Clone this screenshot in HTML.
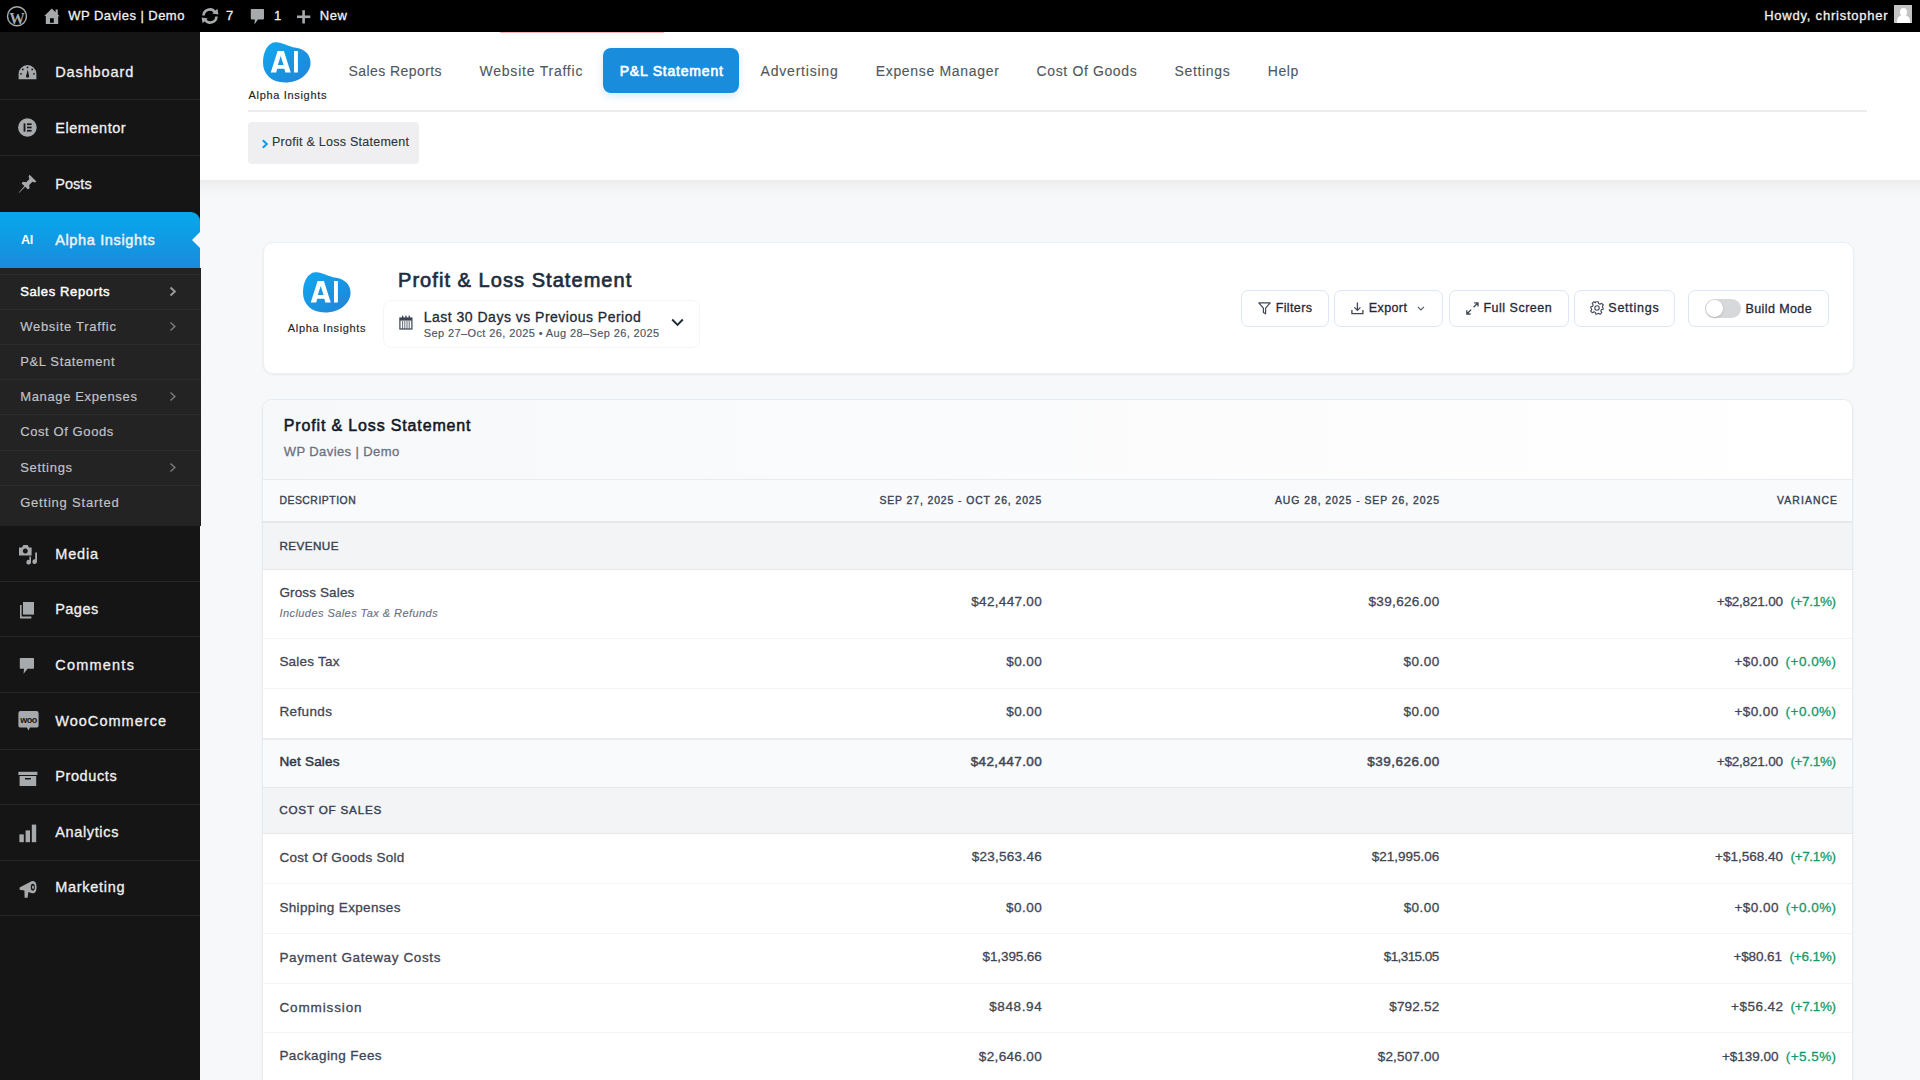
<!DOCTYPE html>
<html><head><meta charset="utf-8">
<style>
*{box-sizing:border-box;margin:0;padding:0}
html,body{width:1920px;height:1080px;overflow:hidden;background:#f7f8fa;font-family:"Liberation Sans",sans-serif}
.t{position:absolute;white-space:nowrap;line-height:1;font-family:"Liberation Sans",sans-serif}
.a{position:absolute}
svg{position:absolute;overflow:visible}
</style></head><body>
<!-- admin bar -->
<div class="a" style="left:0;top:0;width:1920px;height:32px;background:#000"></div>
<!-- sidebar -->
<div class="a" style="left:0;top:32px;width:200px;height:1048px;background:#151515"></div>
<div class="a" style="left:0;top:99px;width:200px;height:1px;background:#262626"></div>
<div class="a" style="left:0;top:155px;width:200px;height:1px;background:#262626"></div>
<div class="a" style="left:0;top:212px;width:200px;height:56px;background:linear-gradient(180deg,#06a8ec,#1a8bdc);border-radius:0 9px 0 0"></div>
<div class="a" style="left:192px;top:232px;width:0;height:0;border-top:8px solid transparent;border-bottom:8px solid transparent;border-right:8px solid #f7f8fa"></div>
<div class="a" style="left:0;top:268px;width:201px;height:258px;background:#232323"></div>
<div class="a" style="left:0;top:274px;width:201px;height:1px;background:#2c2c2c"></div>
<div class="a" style="left:0;top:309px;width:201px;height:1px;background:#2c2c2c"></div>
<div class="a" style="left:0;top:344px;width:201px;height:1px;background:#2c2c2c"></div>
<div class="a" style="left:0;top:379px;width:201px;height:1px;background:#2c2c2c"></div>
<div class="a" style="left:0;top:414px;width:201px;height:1px;background:#2c2c2c"></div>
<div class="a" style="left:0;top:450px;width:201px;height:1px;background:#2c2c2c"></div>
<div class="a" style="left:0;top:485px;width:201px;height:1px;background:#2c2c2c"></div>
<div class="a" style="left:0;top:581px;width:200px;height:1px;background:#262626"></div>
<div class="a" style="left:0;top:636px;width:200px;height:1px;background:#262626"></div>
<div class="a" style="left:0;top:692px;width:200px;height:1px;background:#262626"></div>
<div class="a" style="left:0;top:749px;width:200px;height:1px;background:#262626"></div>
<div class="a" style="left:0;top:804px;width:200px;height:1px;background:#262626"></div>
<div class="a" style="left:0;top:860px;width:200px;height:1px;background:#262626"></div>
<div class="a" style="left:0;top:915px;width:200px;height:1px;background:#262626"></div>
<!-- sub chevrons -->
<svg style="left:169px;top:286px" width="8" height="11" viewBox="0 0 8 11"><path d="M1.5 1.5 L5.8 5.5 L1.5 9.5" fill="none" stroke="#9a9a9a" stroke-width="2"/></svg>
<svg style="left:169px;top:321px" width="8" height="11" viewBox="0 0 8 11"><path d="M1.5 1.5 L5.8 5.5 L1.5 9.5" fill="none" stroke="#777" stroke-width="1.6"/></svg>
<svg style="left:169px;top:391px" width="8" height="11" viewBox="0 0 8 11"><path d="M1.5 1.5 L5.8 5.5 L1.5 9.5" fill="none" stroke="#777" stroke-width="1.6"/></svg>
<svg style="left:169px;top:462px" width="8" height="11" viewBox="0 0 8 11"><path d="M1.5 1.5 L5.8 5.5 L1.5 9.5" fill="none" stroke="#777" stroke-width="1.6"/></svg>

<!-- header -->
<div class="a" style="left:200px;top:179.5px;width:1720px;height:19px;background:linear-gradient(180deg,#ebebec 0%,#f0f1f3 30%,#f5f6f8 65%,#f7f8fa 100%)"></div>
<div class="a" style="left:200px;top:32px;width:1720px;height:147.5px;background:#fff"></div>
<div class="a" style="left:500px;top:32px;width:164px;height:1px;background:#f8b0b0"></div>
<div class="a" style="left:248px;top:110px;width:1619px;height:2px;background:#ececec"></div>
<div class="a" style="left:603px;top:48px;width:136px;height:45px;background:#1a8cdc;border-radius:8px;box-shadow:0 3px 8px rgba(26,140,220,.18)"></div>
<div class="a" style="left:248px;top:122px;width:171px;height:42px;background:#efeff1;border-radius:4px"></div>
<svg style="left:261px;top:139px" width="8" height="10" viewBox="0 0 8 10"><path d="M1.8 1.2 L5.8 5 L1.8 8.8" fill="none" stroke="#0b9be8" stroke-width="2"/></svg>

<!-- card 1 -->
<div class="a" style="left:262.5px;top:241.5px;width:1591px;height:132.5px;background:#fff;border:1px solid #e9f0f4;border-radius:10px;box-shadow:0 1px 3px rgba(16,24,40,.05)"></div>
<div class="a" style="left:383px;top:300px;width:317px;height:48px;border:1px solid #f4f5f7;border-radius:8px"></div>
<div class="a" style="left:1240.5px;top:289.7px;width:88px;height:37.3px;border:1px solid #dce7f3;border-radius:7px;background:#fff"></div>
<div class="a" style="left:1333.8px;top:289.7px;width:109.2px;height:37.3px;border:1px solid #dce7f3;border-radius:7px;background:#fff"></div>
<div class="a" style="left:1448.5px;top:289.7px;width:120.2px;height:37.3px;border:1px solid #dce7f3;border-radius:7px;background:#fff"></div>
<div class="a" style="left:1573.8px;top:289.7px;width:101.5px;height:37.3px;border:1px solid #dce7f3;border-radius:7px;background:#fff"></div>
<div class="a" style="left:1688.2px;top:289.7px;width:140.5px;height:37.3px;border:1px solid #dce7f3;border-radius:7px;background:#fff"></div>
<div class="a" style="left:1704.8px;top:298.8px;width:36px;height:19.5px;border-radius:10px;background:#d6d8dc"></div>
<div class="a" style="left:1706.3px;top:300.3px;width:16.5px;height:16.5px;border-radius:50%;background:#fff;box-shadow:0 1px 2px rgba(0,0,0,.2)"></div>

<!-- card 2 -->
<div class="a" style="left:262px;top:399px;width:1591px;height:700px;background:#fff;border:1px solid #e3ecf2;border-radius:10px;box-shadow:0 1px 3px rgba(16,24,40,.05);overflow:hidden">
  <div class="a" style="left:0;top:0;width:1589px;height:79px;background:linear-gradient(90deg,#f7f8fa,#fff)"></div>
  <div class="a" style="left:0;top:79px;width:1589px;height:44px;background:#f9fafb;border-top:1px solid #e8ebef;border-bottom:2px solid #e5e7eb"></div>
  <div class="a" style="left:0;top:123px;width:1589px;height:47px;background:#f3f4f6;border-bottom:1px solid #e5e7eb"></div>
  <div class="a" style="left:0;top:238px;width:1589px;height:1px;background:#f3f4f6"></div>
  <div class="a" style="left:0;top:288px;width:1589px;height:1px;background:#f3f4f6"></div>
  <div class="a" style="left:0;top:338px;width:1589px;height:49px;background:#f9fafb;border-top:2px solid #eaecef"></div>
  <div class="a" style="left:0;top:387px;width:1589px;height:47px;background:#f3f4f6;border-top:1px solid #e5e7eb;border-bottom:1px solid #e5e7eb"></div>
  <div class="a" style="left:0;top:483px;width:1589px;height:1px;background:#f3f4f6"></div>
  <div class="a" style="left:0;top:533px;width:1589px;height:1px;background:#f3f4f6"></div>
  <div class="a" style="left:0;top:583px;width:1589px;height:1px;background:#f3f4f6"></div>
  <div class="a" style="left:0;top:632px;width:1589px;height:1px;background:#f3f4f6"></div>
</div>

<!-- ===== ICONS ===== -->
<!-- WP logo -->
<svg style="left:6px;top:5px" width="22" height="22" viewBox="0 0 22 22">
 <circle cx="11" cy="11.2" r="9.5" fill="none" stroke="#a7aaad" stroke-width="1.5"/>
 <text x="11" y="19.4" text-anchor="middle" font-family="Liberation Serif" font-weight="700" font-size="17" fill="#a7aaad" transform="translate(11 0) scale(0.92 1) translate(-11 0)">W</text>
</svg>
<!-- home -->
<svg style="left:44px;top:8px" width="17" height="17" viewBox="0 0 17 17">
 <path fill-rule="evenodd" d="M0.3 8 L7.8 0.6 L11.6 4.3 L11.6 1.6 L13.8 1.6 L13.8 6.4 L15.8 8.3 L14.2 8.3 L14.2 16.1 L1.8 16.1 L1.8 8 Z M6 10.2 L6 14.8 L9.8 14.8 L9.8 10.2 Z" fill="#a7aaad"/>
</svg>
<!-- update -->
<svg style="left:200px;top:8px" width="20" height="16" viewBox="0 0 20 16">
 <path d="M3.5 7.5 A6.3 6.3 0 0 1 15 4.2" fill="none" stroke="#a7aaad" stroke-width="2.6"/>
 <path d="M16.5 8.5 A6.3 6.3 0 0 1 5 11.8" fill="none" stroke="#a7aaad" stroke-width="2.6"/>
 <path d="M12.2 5.6 L18.4 6.6 L17.4 0.8 Z" fill="#a7aaad"/>
 <path d="M7.8 10.4 L1.6 9.4 L2.6 15.2 Z" fill="#a7aaad"/>
</svg>
<!-- comment -->
<svg style="left:250px;top:8px" width="15" height="17" viewBox="0 0 15 17">
 <path d="M1.6 1 L13.2 1 Q14 1 14 1.8 L14 10.6 Q14 11.4 13.2 11.4 L8 11.4 L4.4 16.4 L4.8 11.4 L1.6 11.4 Q0.8 11.4 0.8 10.6 L0.8 1.8 Q0.8 1 1.6 1 Z" fill="#a7aaad"/>
</svg>
<!-- plus -->
<svg style="left:297px;top:10px" width="14" height="14" viewBox="0 0 14 14">
 <rect x="5.3" y="0.2" width="2.6" height="13.3" fill="#a7aaad"/><rect x="0" y="5.5" width="13.3" height="2.6" fill="#a7aaad"/>
</svg>
<!-- avatar -->
<div class="a" style="left:1894px;top:5px;width:18px;height:18px;background:#c4c4c4;overflow:hidden">
 <div class="a" style="left:5.5px;top:3px;width:7px;height:8px;border-radius:50%;background:#fff"></div>
 <div class="a" style="left:2.5px;top:10px;width:13px;height:12px;border-radius:6px 6px 0 0;background:#fff"></div>
</div>

<!-- sidebar icons -->
<svg style="left:18px;top:64px" width="19" height="16" viewBox="0 0 19 16">
 <path d="M0.6 15.2 L0.6 10 A8.9 8.9 0 0 1 18.4 10 L18.4 15.2 Z" fill="#a7aaad"/>
 <circle cx="9.5" cy="3.4" r="0.9" fill="#151515"/><circle cx="4.8" cy="5.4" r="0.9" fill="#151515"/><circle cx="14.2" cy="5.4" r="0.9" fill="#151515"/>
 <circle cx="3" cy="9.8" r="0.9" fill="#151515"/><circle cx="16" cy="9.8" r="0.9" fill="#151515"/>
 <path d="M9.8 5.5 L11 11.5 A1.6 1.6 0 1 1 8.2 11.5 Z" fill="#151515"/>
</svg>
<svg style="left:18px;top:118px" width="19" height="19" viewBox="0 0 19 19">
 <circle cx="9.4" cy="9.5" r="9.3" fill="#a7aaad"/>
 <rect x="5.6" y="5.4" width="1.8" height="8.2" fill="#151515"/>
 <rect x="9" y="5.4" width="4.6" height="1.7" fill="#151515"/><rect x="9" y="8.65" width="4.6" height="1.7" fill="#151515"/><rect x="9" y="11.9" width="4.6" height="1.7" fill="#151515"/>
</svg>
<svg style="left:18px;top:174px" width="19" height="20" viewBox="0 0 19 20">
 <path d="M11.6 0.8 L18.4 7.6 L16.8 8.6 L14.4 7.8 L11.2 11 L11.6 14.2 L10 15.6 L7.2 12.8 L1.2 18.8 L0.8 18.4 L6.4 12 L3.6 9.4 L5 7.8 L8.2 8.2 L11.4 5 L10.6 2.6 Z" fill="#a7aaad"/>
</svg>
<div class="t" style="left:21px;top:234.2px;font-size:12.5px;font-weight:700;color:#fff;letter-spacing:-0.3px">AI</div>
<svg style="left:18px;top:544px" width="20" height="21" viewBox="0 0 20 21">
 <path fill-rule="evenodd" d="M1 3.4 L4 3.4 L5.4 1 L9.6 1 L11 3.4 L13.6 3.4 L13.6 11.4 L1 11.4 Z M7.3 4.6 A2.5 2.5 0 1 0 7.31 4.6 Z" fill="#a7aaad"/>
 <path d="M17.2 8.4 L19 8.4 L19 17.6 A2.3 2.3 0 1 1 17.2 15.4 Z" fill="#a7aaad"/>
 <path d="M11.4 12.6 L13 12.6 L13 18.2 A2.3 2.3 0 1 1 11.4 16 Z" fill="#a7aaad"/>
</svg>
<svg style="left:19px;top:601px" width="16" height="18" viewBox="0 0 16 18">
 <path d="M4 1 L15 1 L15 13.6 L4 13.6 Z" fill="#a7aaad"/>
 <path d="M1 4 L2.6 4 L2.6 15.6 L12.4 15.6 L12.4 17.4 L1 17.4 Z" fill="#a7aaad"/>
</svg>
<svg style="left:19px;top:657px" width="16" height="18" viewBox="0 0 16 18">
 <path d="M1.6 1 L14.2 1 Q15 1 15 1.8 L15 11 Q15 11.8 14.2 11.8 L8.6 11.8 L4.6 16.8 L5 11.8 L1.6 11.8 Q0.8 11.8 0.8 11 L0.8 1.8 Q0.8 1 1.6 1 Z" fill="#a7aaad"/>
</svg>
<svg style="left:17.5px;top:710px" width="21" height="22" viewBox="0 0 21 22">
 <path d="M2.6 1 L18.4 1 Q20.6 1 20.6 3.2 L20.6 15.4 Q20.6 17.6 18.4 17.6 L12 17.6 L10.4 20.6 L9 17.6 L2.6 17.6 Q0.4 17.6 0.4 15.4 L0.4 3.2 Q0.4 1 2.6 1 Z" fill="#a7aaad"/>
 <text x="10.5" y="13" text-anchor="middle" font-family="Liberation Sans" font-weight="700" font-size="9" fill="#151515" letter-spacing="-0.5">woo</text>
</svg>
<svg style="left:18px;top:771px" width="20" height="16" viewBox="0 0 20 16">
 <rect x="0.4" y="0.8" width="19" height="3.2" fill="#a7aaad"/>
 <path fill-rule="evenodd" d="M1.6 5 L18.2 5 L18.2 15 L1.6 15 Z M7 7 L7 8.4 L12.8 8.4 L12.8 7 Z" fill="#a7aaad"/>
</svg>
<svg style="left:18.5px;top:824px" width="18" height="19" viewBox="0 0 18 19">
 <rect x="0.4" y="10.4" width="4.4" height="7.8" fill="#a7aaad"/><rect x="6.6" y="6.4" width="4.4" height="11.8" fill="#a7aaad"/><rect x="12.8" y="0.6" width="4.4" height="17.6" fill="#a7aaad"/>
</svg>
<svg style="left:18.5px;top:879px" width="18" height="20" viewBox="0 0 18 20">
 <path d="M0.6 8.6 L13 2 Q17.4 1 17.6 8.2 Q17.4 15 13 14.2 L9.4 13 L8.6 18.8 L5.6 18.8 L5.4 11.4 L0.6 10.8 Z" fill="#a7aaad"/>
 <ellipse cx="13.8" cy="8.2" rx="2" ry="3.4" fill="#151515"/><ellipse cx="14" cy="8.2" rx="0.9" ry="1.8" fill="#a7aaad"/>
</svg>

<!-- header AI logo -->
<svg style="left:263.25px;top:42px" width="48" height="41" viewBox="0 0 48 41">
 <defs><linearGradient id="lg1" x1="0" y1="0" x2="1" y2="1"><stop offset="0" stop-color="#0fa8f0"/><stop offset="1" stop-color="#2283d6"/></linearGradient></defs>
 <path d="M12 0.3 C18.5 -0.5 24 4.2 33 5.8 C43 7.6 47.8 13.5 47.5 21.5 C47 32 36 40.6 22 40.5 C8 40.4 0 32 0 20.5 C0 9.5 5 1 12 0.3 Z" fill="url(#lg1)"/>
 <path fill-rule="evenodd" d="M7.75 30.5 L14.6 9 L20.9 9 L27.75 30.5 L22.3 30.5 L21.3 26.8 L14.2 26.8 L13.2 30.5 Z M14.8 23 L20.6 23 L17.7 14 Z" fill="#fff"/>
 <rect x="31" y="9" width="3.9" height="21.5" fill="#fff"/>
</svg>
<!-- card1 AI logo -->
<svg style="left:303px;top:272.2px" width="48" height="41" viewBox="0 0 48 41">
 <defs><linearGradient id="lg2" x1="0" y1="0" x2="1" y2="1"><stop offset="0" stop-color="#0fa8f0"/><stop offset="1" stop-color="#2283d6"/></linearGradient></defs>
 <path d="M12 0.3 C18.5 -0.5 24 4.2 33 5.8 C43 7.6 47.8 13.5 47.5 21.5 C47 32 36 40.6 22 40.5 C8 40.4 0 32 0 20.5 C0 9.5 5 1 12 0.3 Z" fill="url(#lg2)"/>
 <path fill-rule="evenodd" d="M7.75 30.5 L14.6 9 L20.9 9 L27.75 30.5 L22.3 30.5 L21.3 26.8 L14.2 26.8 L13.2 30.5 Z M14.8 23 L20.6 23 L17.7 14 Z" fill="#fff"/>
 <rect x="31" y="9" width="3.9" height="21.5" fill="#fff"/>
</svg>
<!-- calendar -->
<svg style="left:398.5px;top:315px" width="14" height="15" viewBox="0 0 14 15">
 <rect x="0.9" y="3" width="12" height="11" fill="none" stroke="#3b4452" stroke-width="1.2"/>
 <rect x="0.9" y="3" width="12" height="2.6" fill="#3b4452"/>
 <rect x="3" y="0.6" width="1.3" height="3" fill="#3b4452"/><rect x="6.3" y="0.6" width="1.3" height="3" fill="#3b4452"/><rect x="9.6" y="0.6" width="1.3" height="3" fill="#3b4452"/>
 <path d="M3.6 6 V14 M5.8 6 V14 M8 6 V14 M10.2 6 V14" stroke="#3b4452" stroke-width="0.8"/>
</svg>
<svg style="left:671px;top:318px" width="13" height="9" viewBox="0 0 13 9"><path d="M1.2 1.5 L6.5 6.8 L11.8 1.5" fill="none" stroke="#1f2937" stroke-width="1.9"/></svg>
<!-- button icons -->
<svg style="left:1257.5px;top:302px" width="13" height="13" viewBox="0 0 13 13"><path d="M0.8 0.9 L12.2 0.9 L7.6 6.2 L7.6 11.8 L5.4 10.4 L5.4 6.2 Z" fill="none" stroke="#404856" stroke-width="1.2" stroke-linejoin="round"/></svg>
<svg style="left:1350.5px;top:302px" width="13" height="13" viewBox="0 0 13 13"><path d="M6.4 0.6 V8.2 M3.4 5.4 L6.4 8.4 L9.4 5.4 M0.9 8 V11.6 H11.9 V8" fill="none" stroke="#404856" stroke-width="1.3"/></svg>
<svg style="left:1417px;top:306px" width="8" height="5" viewBox="0 0 8 5"><path d="M0.8 0.8 L3.9 3.9 L7 0.8" fill="none" stroke="#505866" stroke-width="1.1"/></svg>
<svg style="left:1466px;top:302px" width="13" height="13" viewBox="0 0 13 13"><path d="M7.6 5.2 L12 0.8 M8.2 0.8 H12 V4.6 M5.2 7.6 L0.8 12 M0.8 8.2 V12 H4.6" fill="none" stroke="#404856" stroke-width="1.3"/></svg>
<svg style="left:1590px;top:301.4px" width="14" height="14" viewBox="0 0 14 14">
 <path d="M5.8 0.8 H8.2 L8.6 2.6 L10 3.3 L11.6 2.3 L13.3 4 L12.3 5.6 L12.9 7 L13.2 7 L13.2 8.2 L11.4 8.6 L10.8 10 L11.8 11.6 L10.1 13.3 L8.5 12.3 L7.1 12.9 L6.9 13.2 H5.8 L5.4 11.4 L4 10.8 L2.4 11.8 L0.7 10.1 L1.7 8.5 L1.1 7.1 L0.8 6.9 V5.8 L2.6 5.4 L3.2 4 L2.2 2.4 L3.9 0.7 L5.5 1.7 Z" fill="none" stroke="#404856" stroke-width="1.1" stroke-linejoin="round"/>
 <circle cx="7" cy="7" r="2.2" fill="none" stroke="#404856" stroke-width="1.1"/>
</svg>

<div class="t" id="t0" style="left:68.20px;top:9.25px;font-size:13px;color:#f0f0f1;letter-spacing:0.457px;-webkit-text-stroke:0.3px #f0f0f1;">WP Davies | Demo</div>
<div class="t" id="t1" style="left:225.90px;top:9.15px;font-size:13px;color:#f0f0f1;-webkit-text-stroke:0.3px #f0f0f1;">7</div>
<div class="t" id="t2" style="left:274.00px;top:9.15px;font-size:13px;color:#f0f0f1;-webkit-text-stroke:0.3px #f0f0f1;">1</div>
<div class="t" id="t3" style="left:319.80px;top:8.95px;font-size:13px;color:#f0f0f1;letter-spacing:0.492px;-webkit-text-stroke:0.3px #f0f0f1;">New</div>
<div class="t" id="t4" style="left:1764.20px;top:9.15px;font-size:13px;color:#f0f0f1;letter-spacing:0.776px;-webkit-text-stroke:0.3px #f0f0f1;">Howdy, christopher</div>
<div class="t" id="t5" style="left:55.20px;top:64.67px;font-size:14.5px;color:#f0f0f1;letter-spacing:0.895px;-webkit-text-stroke:0.3px #f0f0f1;">Dashboard</div>
<div class="t" id="t6" style="left:55.20px;top:120.98px;font-size:14.5px;color:#f0f0f1;letter-spacing:0.551px;-webkit-text-stroke:0.3px #f0f0f1;">Elementor</div>
<div class="t" id="t7" style="left:55.20px;top:176.68px;font-size:14.5px;color:#f0f0f1;letter-spacing:0.059px;-webkit-text-stroke:0.3px #f0f0f1;">Posts</div>
<div class="t" id="t8" style="left:55.20px;top:232.68px;font-size:14.5px;color:#f0f0f1;letter-spacing:0.647px;-webkit-text-stroke:0.493px #f0f0f1;">Alpha Insights</div>
<div class="t" id="t9" style="left:55.20px;top:546.97px;font-size:14.5px;color:#f0f0f1;letter-spacing:0.875px;-webkit-text-stroke:0.3px #f0f0f1;">Media</div>
<div class="t" id="t10" style="left:55.20px;top:602.47px;font-size:14.5px;color:#f0f0f1;letter-spacing:0.469px;-webkit-text-stroke:0.3px #f0f0f1;">Pages</div>
<div class="t" id="t11" style="left:55.20px;top:658.07px;font-size:14.5px;color:#f0f0f1;letter-spacing:1.227px;-webkit-text-stroke:0.3px #f0f0f1;">Comments</div>
<div class="t" id="t12" style="left:55.20px;top:713.67px;font-size:14.5px;color:#f0f0f1;letter-spacing:1.045px;-webkit-text-stroke:0.3px #f0f0f1;">WooCommerce</div>
<div class="t" id="t13" style="left:55.20px;top:769.17px;font-size:14.5px;color:#f0f0f1;letter-spacing:0.624px;-webkit-text-stroke:0.3px #f0f0f1;">Products</div>
<div class="t" id="t14" style="left:55.20px;top:824.77px;font-size:14.5px;color:#f0f0f1;letter-spacing:0.646px;-webkit-text-stroke:0.3px #f0f0f1;">Analytics</div>
<div class="t" id="t15" style="left:55.20px;top:880.27px;font-size:14.5px;color:#f0f0f1;letter-spacing:0.716px;-webkit-text-stroke:0.3px #f0f0f1;">Marketing</div>
<div class="t" id="t16" style="left:20.20px;top:285.25px;font-size:13px;color:#ffffff;letter-spacing:0.629px;-webkit-text-stroke:0.442px #ffffff;">Sales Reports</div>
<div class="t" id="t17" style="left:20.20px;top:320.25px;font-size:13px;color:#c3c4c7;letter-spacing:0.729px;-webkit-text-stroke:0.15px #c3c4c7;">Website Traffic</div>
<div class="t" id="t18" style="left:20.20px;top:355.25px;font-size:13px;color:#c3c4c7;letter-spacing:0.619px;-webkit-text-stroke:0.15px #c3c4c7;">P&amp;L Statement</div>
<div class="t" id="t19" style="left:20.20px;top:390.25px;font-size:13px;color:#c3c4c7;letter-spacing:0.644px;-webkit-text-stroke:0.15px #c3c4c7;">Manage Expenses</div>
<div class="t" id="t20" style="left:20.20px;top:425.25px;font-size:13px;color:#c3c4c7;letter-spacing:0.593px;-webkit-text-stroke:0.15px #c3c4c7;">Cost Of Goods</div>
<div class="t" id="t21" style="left:20.20px;top:460.95px;font-size:13px;color:#c3c4c7;letter-spacing:0.702px;-webkit-text-stroke:0.15px #c3c4c7;">Settings</div>
<div class="t" id="t22" style="left:20.20px;top:495.95px;font-size:13px;color:#c3c4c7;letter-spacing:0.789px;-webkit-text-stroke:0.15px #c3c4c7;">Getting Started</div>
<div class="t" id="t23" style="left:248.60px;top:90.25px;font-size:11px;color:#1d2327;letter-spacing:0.669px;-webkit-text-stroke:0.15px #1d2327;">Alpha Insights</div>
<div class="t" id="t24" style="left:348.40px;top:63.80px;font-size:14px;color:#50575e;letter-spacing:0.439px;-webkit-text-stroke:0.12px #50575e;">Sales Reports</div>
<div class="t" id="t25" style="left:479.50px;top:63.80px;font-size:14px;color:#50575e;letter-spacing:0.773px;-webkit-text-stroke:0.12px #50575e;">Website Traffic</div>
<div class="t" id="t26" style="left:760.60px;top:63.80px;font-size:14px;color:#50575e;letter-spacing:0.783px;-webkit-text-stroke:0.12px #50575e;">Advertising</div>
<div class="t" id="t27" style="left:875.70px;top:63.80px;font-size:14px;color:#50575e;letter-spacing:0.683px;-webkit-text-stroke:0.12px #50575e;">Expense Manager</div>
<div class="t" id="t28" style="left:1036.60px;top:63.80px;font-size:14px;color:#50575e;letter-spacing:0.626px;-webkit-text-stroke:0.12px #50575e;">Cost Of Goods</div>
<div class="t" id="t29" style="left:1174.40px;top:63.80px;font-size:14px;color:#50575e;letter-spacing:0.687px;-webkit-text-stroke:0.12px #50575e;">Settings</div>
<div class="t" id="t30" style="left:1267.70px;top:63.80px;font-size:14px;color:#50575e;letter-spacing:0.601px;-webkit-text-stroke:0.12px #50575e;">Help</div>
<div class="t" id="t31" style="left:619.70px;top:64.00px;font-size:14px;color:#ffffff;letter-spacing:0.795px;-webkit-text-stroke:0.65px #ffffff;">P&amp;L Statement</div>
<div class="t" id="t32" style="left:272.00px;top:135.97px;font-size:12.5px;color:#2c3338;letter-spacing:0.259px;-webkit-text-stroke:0.12px #2c3338;">Profit &amp; Loss Statement</div>
<div class="t" id="t33" style="left:287.80px;top:323.05px;font-size:11px;color:#1d2327;letter-spacing:0.669px;-webkit-text-stroke:0.15px #1d2327;">Alpha Insights</div>
<div class="t" id="t34" style="left:398.00px;top:269.70px;font-size:20px;color:#1e2d3d;letter-spacing:1.054px;-webkit-text-stroke:0.68px #1e2d3d;">Profit &amp; Loss Statement</div>
<div class="t" id="t35" style="left:423.80px;top:309.90px;font-size:14px;color:#1f2937;letter-spacing:0.489px;-webkit-text-stroke:0.3px #1f2937;">Last 30 Days vs Previous Period</div>
<div class="t" id="t36" style="left:423.80px;top:328.45px;font-size:11px;color:#4b5563;letter-spacing:0.391px;-webkit-text-stroke:0.15px #4b5563;">Sep 27–Oct 26, 2025 • Aug 28–Sep 26, 2025</div>
<div class="t" id="t37" style="left:1275.70px;top:302.07px;font-size:12.5px;color:#1f2937;letter-spacing:0.378px;-webkit-text-stroke:0.3px #1f2937;">Filters</div>
<div class="t" id="t38" style="left:1368.80px;top:302.07px;font-size:12.5px;color:#1f2937;letter-spacing:0.392px;-webkit-text-stroke:0.3px #1f2937;">Export</div>
<div class="t" id="t39" style="left:1483.40px;top:302.07px;font-size:12.5px;color:#1f2937;letter-spacing:0.507px;-webkit-text-stroke:0.3px #1f2937;">Full Screen</div>
<div class="t" id="t40" style="left:1608.30px;top:302.07px;font-size:12.5px;color:#1f2937;letter-spacing:0.747px;-webkit-text-stroke:0.3px #1f2937;">Settings</div>
<div class="t" id="t41" style="left:1745.40px;top:302.68px;font-size:12.5px;color:#1f2937;letter-spacing:0.417px;-webkit-text-stroke:0.3px #1f2937;">Build Mode</div>
<div class="t" id="t42" style="left:283.75px;top:418.00px;font-size:16px;color:#111827;letter-spacing:0.849px;-webkit-text-stroke:0.544px #111827;">Profit &amp; Loss Statement</div>
<div class="t" id="t43" style="left:283.75px;top:444.55px;font-size:13px;color:#6b7280;letter-spacing:0.410px;-webkit-text-stroke:0.3px #6b7280;">WP Davies | Demo</div>
<div class="t" id="t44" style="left:279.40px;top:495.56px;font-size:10.4px;color:#374151;letter-spacing:0.528px;-webkit-text-stroke:0.354px #374151;">DESCRIPTION</div>
<div class="t" id="t45" style="left:879.40px;top:495.56px;font-size:10.4px;color:#374151;letter-spacing:0.910px;-webkit-text-stroke:0.354px #374151;">SEP 27, 2025 - OCT 26, 2025</div>
<div class="t" id="t46" style="left:1274.90px;top:495.56px;font-size:10.4px;color:#374151;letter-spacing:0.964px;-webkit-text-stroke:0.354px #374151;">AUG 28, 2025 - SEP 26, 2025</div>
<div class="t" id="t47" style="left:1777.10px;top:495.56px;font-size:10.4px;color:#374151;letter-spacing:1.077px;-webkit-text-stroke:0.354px #374151;">VARIANCE</div>
<div class="t" id="t48" style="left:279.40px;top:539.65px;font-size:11.7px;color:#374151;letter-spacing:0.431px;-webkit-text-stroke:0.398px #374151;">REVENUE</div>
<div class="t" id="t49" style="left:279.20px;top:803.95px;font-size:11.7px;color:#374151;letter-spacing:0.794px;-webkit-text-stroke:0.398px #374151;">COST OF SALES</div>
<div class="t" id="t50" style="left:279.40px;top:586.32px;font-size:13.5px;color:#3f4654;letter-spacing:0.137px;-webkit-text-stroke:0.3px #3f4654;">Gross Sales</div>
<div class="t" id="t51" style="left:971.30px;top:595.42px;font-size:13.5px;color:#3f4654;letter-spacing:0.314px;-webkit-text-stroke:0.3px #3f4654;">$42,447.00</div>
<div class="t" id="t52" style="left:1368.50px;top:595.42px;font-size:13.5px;color:#3f4654;letter-spacing:0.347px;-webkit-text-stroke:0.3px #3f4654;">$39,626.00</div>
<div class="t" id="t53" style="left:1716.70px;top:595.42px;font-size:13.5px;color:#3f4654;letter-spacing:-0.184px;-webkit-text-stroke:0.3px #3f4654;">+$2,821.00</div>
<div class="t" id="t54" style="left:1790.40px;top:595.42px;font-size:13.5px;color:#15996a;letter-spacing:-0.326px;-webkit-text-stroke:0.3px #15996a;">(+7.1%)</div>
<div class="t" id="t55" style="left:279.40px;top:655.32px;font-size:13.5px;color:#3f4654;letter-spacing:0.225px;-webkit-text-stroke:0.3px #3f4654;">Sales Tax</div>
<div class="t" id="t56" style="left:1006.30px;top:655.23px;font-size:13.5px;color:#3f4654;letter-spacing:0.401px;-webkit-text-stroke:0.3px #3f4654;">$0.00</div>
<div class="t" id="t57" style="left:1403.60px;top:655.23px;font-size:13.5px;color:#3f4654;letter-spacing:0.451px;-webkit-text-stroke:0.3px #3f4654;">$0.00</div>
<div class="t" id="t58" style="left:1734.40px;top:655.23px;font-size:13.5px;color:#3f4654;letter-spacing:0.426px;-webkit-text-stroke:0.3px #3f4654;">+$0.00</div>
<div class="t" id="t59" style="left:1785.60px;top:655.23px;font-size:13.5px;color:#15996a;letter-spacing:0.474px;-webkit-text-stroke:0.3px #15996a;">(+0.0%)</div>
<div class="t" id="t60" style="left:279.40px;top:705.23px;font-size:13.5px;color:#3f4654;letter-spacing:0.384px;-webkit-text-stroke:0.3px #3f4654;">Refunds</div>
<div class="t" id="t61" style="left:1006.30px;top:705.23px;font-size:13.5px;color:#3f4654;letter-spacing:0.401px;-webkit-text-stroke:0.3px #3f4654;">$0.00</div>
<div class="t" id="t62" style="left:1403.60px;top:705.23px;font-size:13.5px;color:#3f4654;letter-spacing:0.451px;-webkit-text-stroke:0.3px #3f4654;">$0.00</div>
<div class="t" id="t63" style="left:1734.40px;top:705.23px;font-size:13.5px;color:#3f4654;letter-spacing:0.426px;-webkit-text-stroke:0.3px #3f4654;">+$0.00</div>
<div class="t" id="t64" style="left:1785.60px;top:705.23px;font-size:13.5px;color:#15996a;letter-spacing:0.474px;-webkit-text-stroke:0.3px #15996a;">(+0.0%)</div>
<div class="t" id="t65" style="left:279.40px;top:755.12px;font-size:13.5px;color:#2f3644;letter-spacing:0.196px;-webkit-text-stroke:0.459px #2f3644;">Net Sales</div>
<div class="t" id="t66" style="left:970.70px;top:755.23px;font-size:13.5px;color:#3f4654;letter-spacing:0.380px;-webkit-text-stroke:0.459px #3f4654;">$42,447.00</div>
<div class="t" id="t67" style="left:1367.20px;top:755.23px;font-size:13.5px;color:#3f4654;letter-spacing:0.491px;-webkit-text-stroke:0.459px #3f4654;">$39,626.00</div>
<div class="t" id="t68" style="left:1716.70px;top:755.23px;font-size:13.5px;color:#3f4654;letter-spacing:-0.184px;-webkit-text-stroke:0.3px #3f4654;">+$2,821.00</div>
<div class="t" id="t69" style="left:1790.40px;top:755.23px;font-size:13.5px;color:#15996a;letter-spacing:-0.326px;-webkit-text-stroke:0.3px #15996a;">(+7.1%)</div>
<div class="t" id="t70" style="left:279.40px;top:850.52px;font-size:13.5px;color:#3f4654;letter-spacing:0.290px;-webkit-text-stroke:0.3px #3f4654;">Cost Of Goods Sold</div>
<div class="t" id="t71" style="left:971.70px;top:850.32px;font-size:13.5px;color:#3f4654;letter-spacing:0.269px;-webkit-text-stroke:0.3px #3f4654;">$23,563.46</div>
<div class="t" id="t72" style="left:1371.70px;top:850.32px;font-size:13.5px;color:#3f4654;letter-spacing:-0.009px;-webkit-text-stroke:0.3px #3f4654;">$21,995.06</div>
<div class="t" id="t73" style="left:1715.10px;top:850.32px;font-size:13.5px;color:#3f4654;letter-spacing:0.005px;-webkit-text-stroke:0.3px #3f4654;">+$1,568.40</div>
<div class="t" id="t74" style="left:1790.50px;top:850.32px;font-size:13.5px;color:#15996a;letter-spacing:-0.343px;-webkit-text-stroke:0.3px #15996a;">(+7.1%)</div>
<div class="t" id="t75" style="left:279.40px;top:900.52px;font-size:13.5px;color:#3f4654;letter-spacing:0.344px;-webkit-text-stroke:0.3px #3f4654;">Shipping Expenses</div>
<div class="t" id="t76" style="left:1005.90px;top:900.73px;font-size:13.5px;color:#3f4654;letter-spacing:0.501px;-webkit-text-stroke:0.3px #3f4654;">$0.00</div>
<div class="t" id="t77" style="left:1403.70px;top:900.73px;font-size:13.5px;color:#3f4654;letter-spacing:0.426px;-webkit-text-stroke:0.3px #3f4654;">$0.00</div>
<div class="t" id="t78" style="left:1734.50px;top:900.73px;font-size:13.5px;color:#3f4654;letter-spacing:0.446px;-webkit-text-stroke:0.3px #3f4654;">+$0.00</div>
<div class="t" id="t79" style="left:1785.80px;top:900.73px;font-size:13.5px;color:#15996a;letter-spacing:0.441px;-webkit-text-stroke:0.3px #15996a;">(+0.0%)</div>
<div class="t" id="t80" style="left:279.40px;top:950.52px;font-size:13.5px;color:#3f4654;letter-spacing:0.627px;-webkit-text-stroke:0.3px #3f4654;">Payment Gateway Costs</div>
<div class="t" id="t81" style="left:982.60px;top:950.32px;font-size:13.5px;color:#3f4654;letter-spacing:-0.120px;-webkit-text-stroke:0.3px #3f4654;">$1,395.66</div>
<div class="t" id="t82" style="left:1383.70px;top:950.32px;font-size:13.5px;color:#3f4654;letter-spacing:-0.570px;-webkit-text-stroke:0.3px #3f4654;">$1,315.05</div>
<div class="t" id="t83" style="left:1733.40px;top:950.32px;font-size:13.5px;color:#3f4654;letter-spacing:-0.098px;-webkit-text-stroke:0.3px #3f4654;">+$80.61</div>
<div class="t" id="t84" style="left:1789.40px;top:950.32px;font-size:13.5px;color:#15996a;letter-spacing:-0.159px;-webkit-text-stroke:0.3px #15996a;">(+6.1%)</div>
<div class="t" id="t85" style="left:279.40px;top:1000.52px;font-size:13.5px;color:#3f4654;letter-spacing:0.882px;-webkit-text-stroke:0.3px #3f4654;">Commission</div>
<div class="t" id="t86" style="left:989.20px;top:1000.32px;font-size:13.5px;color:#3f4654;letter-spacing:0.615px;-webkit-text-stroke:0.3px #3f4654;">$848.94</div>
<div class="t" id="t87" style="left:1389.20px;top:1000.32px;font-size:13.5px;color:#3f4654;letter-spacing:0.198px;-webkit-text-stroke:0.3px #3f4654;">$792.52</div>
<div class="t" id="t88" style="left:1731.10px;top:1000.32px;font-size:13.5px;color:#3f4654;letter-spacing:0.469px;-webkit-text-stroke:0.3px #3f4654;">+$56.42</div>
<div class="t" id="t89" style="left:1790.50px;top:1000.32px;font-size:13.5px;color:#15996a;letter-spacing:-0.343px;-webkit-text-stroke:0.3px #15996a;">(+7.1%)</div>
<div class="t" id="t90" style="left:279.40px;top:1049.03px;font-size:13.5px;color:#3f4654;letter-spacing:0.414px;-webkit-text-stroke:0.3px #3f4654;">Packaging Fees</div>
<div class="t" id="t91" style="left:978.80px;top:1049.62px;font-size:13.5px;color:#3f4654;letter-spacing:0.355px;-webkit-text-stroke:0.3px #3f4654;">$2,646.00</div>
<div class="t" id="t92" style="left:1377.70px;top:1049.62px;font-size:13.5px;color:#3f4654;letter-spacing:0.180px;-webkit-text-stroke:0.3px #3f4654;">$2,507.00</div>
<div class="t" id="t93" style="left:1722.00px;top:1049.62px;font-size:13.5px;color:#3f4654;letter-spacing:-0.041px;-webkit-text-stroke:0.3px #3f4654;">+$139.00</div>
<div class="t" id="t94" style="left:1785.80px;top:1049.62px;font-size:13.5px;color:#15996a;letter-spacing:0.441px;-webkit-text-stroke:0.3px #15996a;">(+5.5%)</div>
<div class="t" id="t95" style="left:279.40px;top:608.45px;font-size:11px;color:#6b7280;font-style:italic;letter-spacing:0.442px;-webkit-text-stroke:0.15px #6b7280;">Includes Sales Tax &amp; Refunds</div>
</body></html>
